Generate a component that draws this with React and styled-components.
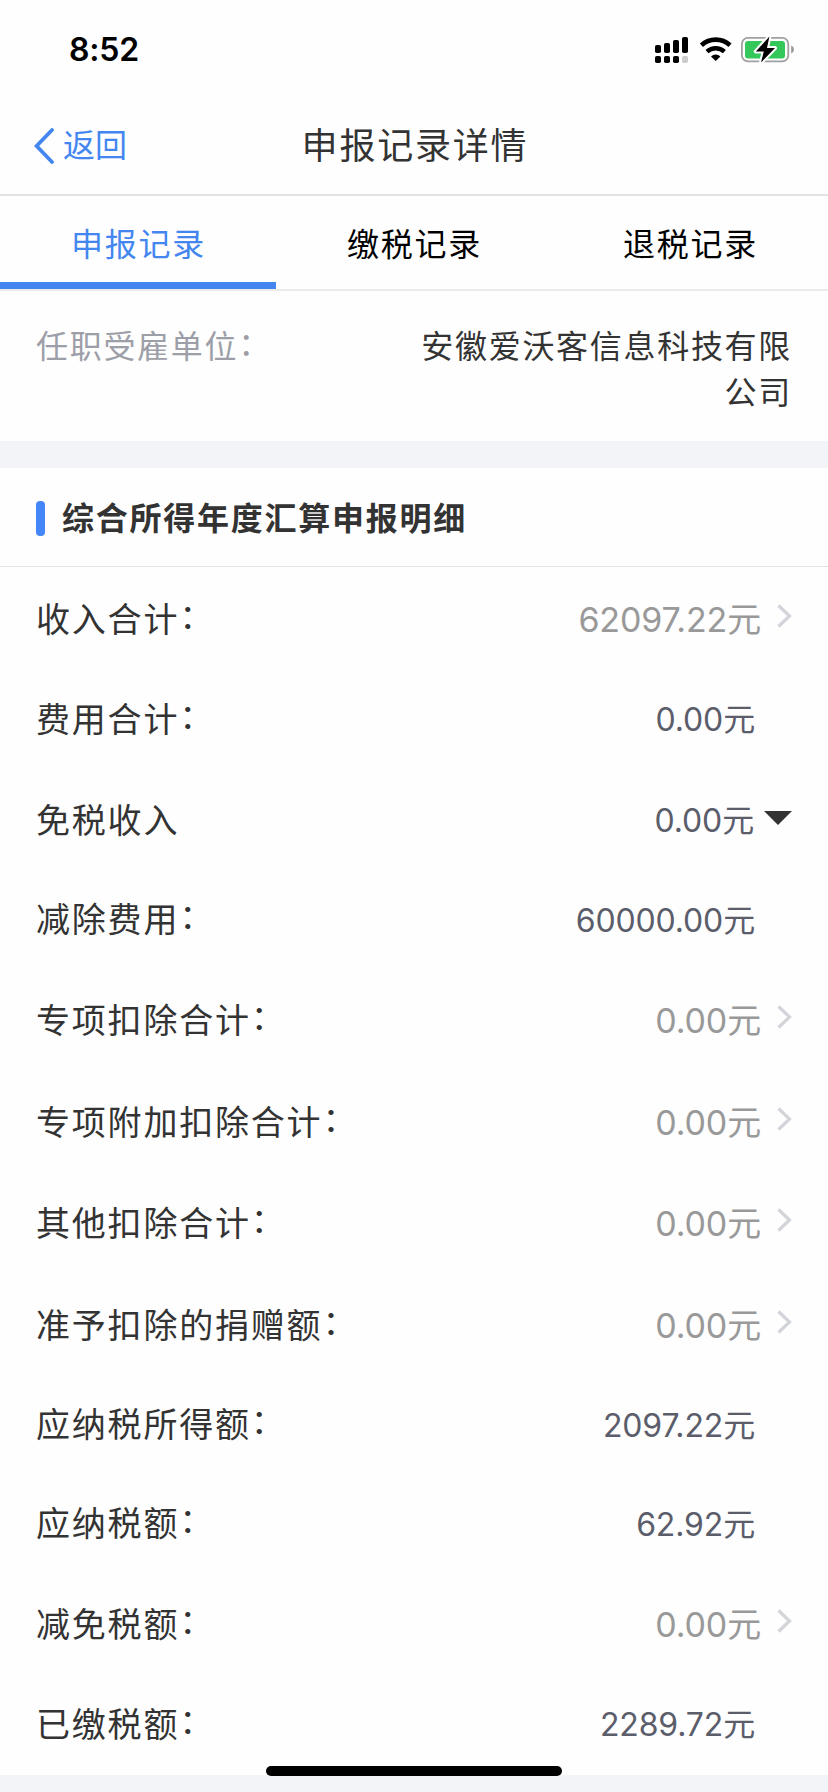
import React, { useState } from 'react';
import styled, { createGlobalStyle } from 'styled-components';

const GlobalStyle = createGlobalStyle`
  * {
    box-sizing: border-box;
  }
  body {
    margin: 0;
    background: #f3f4f8;
    font-family: Inter, 'Noto Sans CJK SC', sans-serif;
    color: #333;
  }
`;

const Screen = styled.div`
  position: relative;
  display: flex;
  flex-direction: column;
  width: 828px;
  height: 1792px;
  overflow: hidden;
  background: #f3f4f8;
`;

const StatusBar = styled.header`
  display: flex;
  justify-content: space-between;
  height: 98px;
  padding: 0 34px 0 69px;
  background: #fefefe;
`;

const Clock = styled.div`
  padding-top: 30px;
  font-size: 32px;
  line-height: 40px;
  font-weight: 600;
  letter-spacing: -0.2px;
  color: #000;
`;

const StatusIcons = styled.svg`
  display: block;
  width: 142px;
  height: 30px;
  margin-top: 35px;
`;

const NavBar = styled.nav`
  display: grid;
  grid-template-columns: 1fr auto 1fr;
  align-items: center;
  height: 98px;
  padding: 0 33px 0 34px;
  border-bottom: 2px solid #e2e2e2;
  background: #fefefe;
`;

const BackButton = styled.div`
  display: flex;
  align-items: center;
  gap: 9px;
  font-size: 32px;
  line-height: 48px;
  color: #4486f0;
  cursor: pointer;
`;

const Title = styled.h1`
  margin: 0;
  padding-left: 1px;
  font-size: 36px;
  line-height: 52px;
  font-weight: 400;
  letter-spacing: 1.8px;
`;

const Tabs = styled.div`
  display: flex;
  height: 95px;
  border-bottom: 2px solid #ebebeb;
  background: #fefefe;
`;

const Tab = styled.div`
  flex: 1;
  padding: 25px 0 0 1px;
  border-bottom: 7px solid ${(props) => (props.$active ? '#4486f0' : 'transparent')};
  text-align: center;
  font-size: 32px;
  line-height: 48px;
  letter-spacing: 1.8px;
  color: ${(props) => (props.$active ? '#4486f0' : '#000')};
  cursor: pointer;
`;

const Company = styled.section`
  display: flex;
  justify-content: space-between;
  height: 150px;
  padding: 33px 36px 0;
  background: #fefefe;
  font-size: 32px;
  line-height: 46px;
  letter-spacing: 1.7px;
`;

const CompanyLabel = styled.div`
  color: #9d9fa8;
`;

const CompanyName = styled.div`
  width: 374px;
  text-align: right;
`;

const Detail = styled.section`
  height: 1307px;
  margin-top: 27px;
  background: #fefefe;
`;

const SectionTitle = styled.h2`
  display: flex;
  align-items: center;
  gap: 17px;
  height: 99px;
  margin: 0;
  padding: 3px 36px 0;
  border-bottom: 1px solid #e2e2e2;
  font-size: 32px;
  line-height: 48px;
  font-weight: 700;
  letter-spacing: 1.75px;
`;

const Marker = styled.span`
  width: 9px;
  height: 35px;
  border-radius: 4px;
  background: #4486f7;
`;

const Row = styled.div`
  display: flex;
  align-items: center;
  justify-content: space-between;
  height: ${(props) => (props.$type === 'plain' ? 99 : 101.5)}px;
  padding: 0 36px ${(props) => (props.$type === 'plain' ? 2 : 0)}px;
`;

const Label = styled.span`
  font-size: 34px;
  letter-spacing: 1.8px;
`;

const Colon = styled.span`
  vertical-align: 3px;
  line-height: 0;
`;

const Value = styled.span`
  display: flex;
  align-items: center;
  gap: ${(props) => (props.$type === 'link' ? 16 : 10)}px;
  padding-right: ${(props) => (props.$type === 'plain' ? 37 : 0)}px;
  font-size: ${(props) => (props.$type === 'link' ? 34 : 32)}px;
  letter-spacing: -0.15px;
  color: ${(props) => (props.$type === 'link' ? '#999' : '#5b5d6b')};
`;

const ChevronIcon = styled.svg`
  display: block;
  width: 15px;
  height: 24px;
  margin-bottom: 3px;
`;

const HomeIndicator = styled.div`
  position: absolute;
  left: 266px;
  bottom: 16px;
  width: 296px;
  height: 10px;
  border-radius: 5px;
  background: #000;
`;

const tabs = ['申报记录', '缴税记录', '退税记录'];

const rows = [
  { label: '收入合计', colon: true, value: '62097.22', type: 'link' },
  { label: '费用合计', colon: true, value: '0.00', type: 'plain' },
  { label: '免税收入', colon: false, value: '0.00', type: 'fold' },
  { label: '减除费用', colon: true, value: '60000.00', type: 'plain' },
  { label: '专项扣除合计', colon: true, value: '0.00', type: 'link' },
  { label: '专项附加扣除合计', colon: true, value: '0.00', type: 'link' },
  { label: '其他扣除合计', colon: true, value: '0.00', type: 'link' },
  { label: '准予扣除的捐赠额', colon: true, value: '0.00', type: 'link' },
  { label: '应纳税所得额', colon: true, value: '2097.22', type: 'plain' },
  { label: '应纳税额', colon: true, value: '62.92', type: 'plain' },
  { label: '减免税额', colon: true, value: '0.00', type: 'link' },
  { label: '已缴税额', colon: true, value: '2289.72', type: 'plain' },
];

const StatusGlyphs = () => (
  <StatusIcons viewBox='0 0 142 30'>
    {/* dual sim signal */}
    <rect x='3' y='10' width='6' height='8' rx='1.8' />
    <rect x='12' y='8' width='6' height='10' rx='1.8' />
    <rect x='21' y='5' width='6' height='13' rx='1.8' />
    <rect x='30' y='2' width='6' height='16' rx='1.8' />
    <rect x='3' y='21' width='6' height='7' rx='1.8' />
    <rect x='12' y='21' width='6' height='7' rx='1.8' />
    <rect x='21' y='21' width='6' height='7' rx='1.8' />
    <rect x='30' y='21' width='6' height='7' rx='1.8' fill='#ccc' />
    {/* wifi */}
    <path d='M49.4 10.2a21 21 0 0 1 28.6 0' fill='none' stroke='#000' strokeWidth='4.6' />
    <path d='M55 16.6a13 13 0 0 1 17.4 0' fill='none' stroke='#000' strokeWidth='4.4' />
    <path d='M59 21.4a7 7 0 0 1 9.4 0L63.7 26z' />
    {/* battery */}
    <rect x='89.9' y='2.9' width='46.4' height='23.4' rx='6' fill='none' stroke='#a0a0a0' strokeWidth='1.8' />
    <rect x='93' y='6' width='40' height='17.5' rx='3' fill='#34c759' />
    <path d='M139.2 10.5q2.8 1.2 2.8 4t-2.8 4z' fill='#999' />
    <path
      d='M117.4 1.6L103.8 16.4h8L109 27.6 123 13h-8z'
      stroke='#fff'
      strokeWidth='4'
      strokeLinejoin='round'
      paintOrder='stroke'
    />
  </StatusIcons>
);

const BackIcon = () => (
  <svg width='20' height='36' viewBox='0 0 20 36' fill='none'>
    <path d='M18 2L2.6 18 18 34' stroke='#4486f0' strokeWidth='3.8' strokeLinecap='round' />
  </svg>
);

const Chevron = () => (
  <ChevronIcon viewBox='0 0 15 24' fill='none'>
    <path d='M1.5 1.5L12.5 12 1.5 22.5' stroke='#d3d4d9' strokeWidth='3.2' />
  </ChevronIcon>
);

const Caret = () => (
  <svg width='28' height='14' viewBox='0 0 28 14'>
    <path d='M0 0h28L14 14z' fill='#333' />
  </svg>
);

const App = () => {
  const [active, setActive] = useState(0);

  return (
    <Screen>
      <GlobalStyle />
      <StatusBar>
        <Clock>8:52</Clock>
        <StatusGlyphs />
      </StatusBar>
      <NavBar>
        <BackButton>
          <BackIcon />
          返回
        </BackButton>
        <Title>申报记录详情</Title>
      </NavBar>
      <Tabs>
        {tabs.map((tab, idx) => (
          <Tab key={tab} $active={idx === active} onClick={() => setActive(idx)}>
            {tab}
          </Tab>
        ))}
      </Tabs>
      <Company>
        <CompanyLabel>
          任职受雇单位<Colon>：</Colon>
        </CompanyLabel>
        <CompanyName>安徽爱沃客信息科技有限公司</CompanyName>
      </Company>
      <Detail>
        <SectionTitle>
          <Marker />
          综合所得年度汇算申报明细
        </SectionTitle>
        {rows.map((row) => (
          <Row key={row.label} $type={row.type}>
            <Label>
              {row.label}
              {row.colon && <Colon>：</Colon>}
            </Label>
            <Value $type={row.type}>
              {row.value}元
              {row.type === 'link' && <Chevron />}
              {row.type === 'fold' && <Caret />}
            </Value>
          </Row>
        ))}
      </Detail>
      <HomeIndicator />
    </Screen>
  );
};

export default App;
